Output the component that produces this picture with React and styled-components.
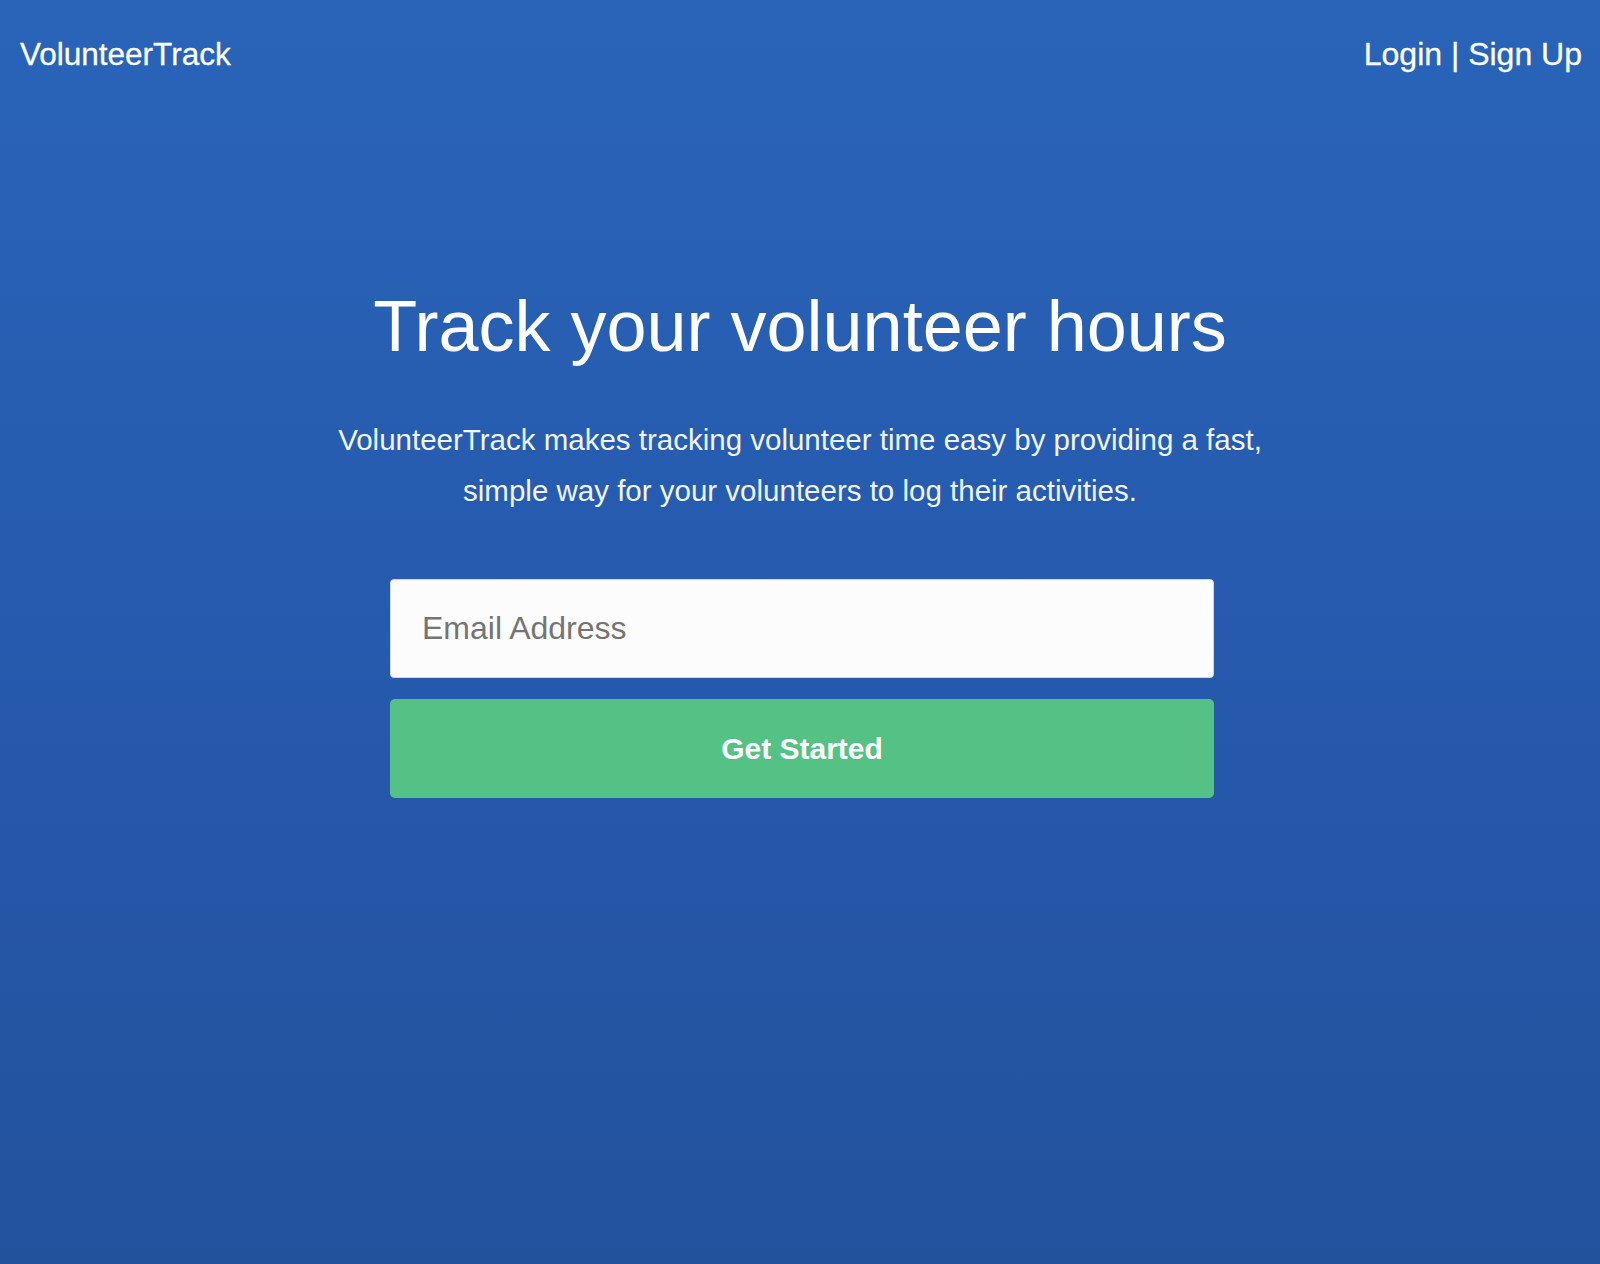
import React from "react";
import styled, { createGlobalStyle } from "styled-components";

const GlobalStyle = createGlobalStyle`
  html, body, #root {
    margin: 0;
    padding: 0;
    height: 100%;
  }
  body {
    font-family: "Liberation Sans", Arial, Helvetica, sans-serif;
    background: #2963b8;
  }
  * { box-sizing: border-box; }
`;

const Page = styled.div`
  min-height: 100%;
  background: linear-gradient(180deg, #2964b9 0%, #2558ab 60%, #22529c 100%);
  color: #ffffff;
  display: flex;
  flex-direction: column;
`;

const Header = styled.header`
  height: 108px;
  display: flex;
  align-items: center;
  justify-content: space-between;
  padding: 0 18px 0 20px;
`;

const Logo = styled.a`
  font-size: 31.5px;
  line-height: 36px;
  color: #ffffff;
  text-decoration: none;
  -webkit-text-stroke: 0.3px #ffffff;
`;

const Nav = styled.nav`
  display: flex;
  align-items: center;
  font-size: 32px;
  line-height: 36px;
  white-space: pre;
  -webkit-text-stroke: 0.3px #ffffff;
`;

const NavLink = styled.a`
  color: #ffffff;
  text-decoration: none;
`;

const Main = styled.main`
  display: flex;
  flex-direction: column;
  align-items: center;
  padding-top: 175px;
`;

const Title = styled.h1`
  margin: 0;
  font-size: 72px;
  line-height: 86px;
  font-weight: 400;
  text-align: center;
`;

const Lead = styled.p`
  margin: 45px 0 0;
  max-width: 960px;
  font-size: 29.5px;
  line-height: 51px;
  font-weight: 400;
  text-align: center;
  color: #f1f5fb;
`;

const Form = styled.form`
  width: 824px;
  margin: 63px 0 0 4px;
  display: flex;
  flex-direction: column;
  gap: 21px;
`;

const EmailInput = styled.input`
  height: 99px;
  width: 100%;
  padding: 0 31px;
  background: #fcfcfc;
  border: 1px solid #d6d6d6;
  border-radius: 4px;
  font-family: "Liberation Sans", Arial, Helvetica, sans-serif;
  font-size: 32px;
  color: #333;
  outline: none;
  &::placeholder {
    color: #747474;
  }
`;

const SubmitButton = styled.button`
  height: 99px;
  width: 100%;
  background: #54c285;
  border: none;
  border-radius: 5px;
  color: #ffffff;
  font-family: "Liberation Sans", Arial, Helvetica, sans-serif;
  font-size: 30px;
  font-weight: 700;
  cursor: pointer;
`;

export default function App() {
  return (
    <>
      <GlobalStyle />
      <Page>
        <Header>
          <Logo href="#">VolunteerTrack</Logo>
          <Nav>
            <NavLink href="#">Login</NavLink>
            <span> | </span>
            <NavLink href="#">Sign Up</NavLink>
          </Nav>
        </Header>
        <Main>
          <Title>Track your volunteer hours</Title>
          <Lead>
            VolunteerTrack makes tracking volunteer time easy by providing a fast,
            simple way for your volunteers to log their activities.
          </Lead>
          <Form onSubmit={(e) => e.preventDefault()}>
            <EmailInput type="email" placeholder="Email Address" />
            <SubmitButton type="submit">Get Started</SubmitButton>
          </Form>
        </Main>
      </Page>
    </>
  );
}
